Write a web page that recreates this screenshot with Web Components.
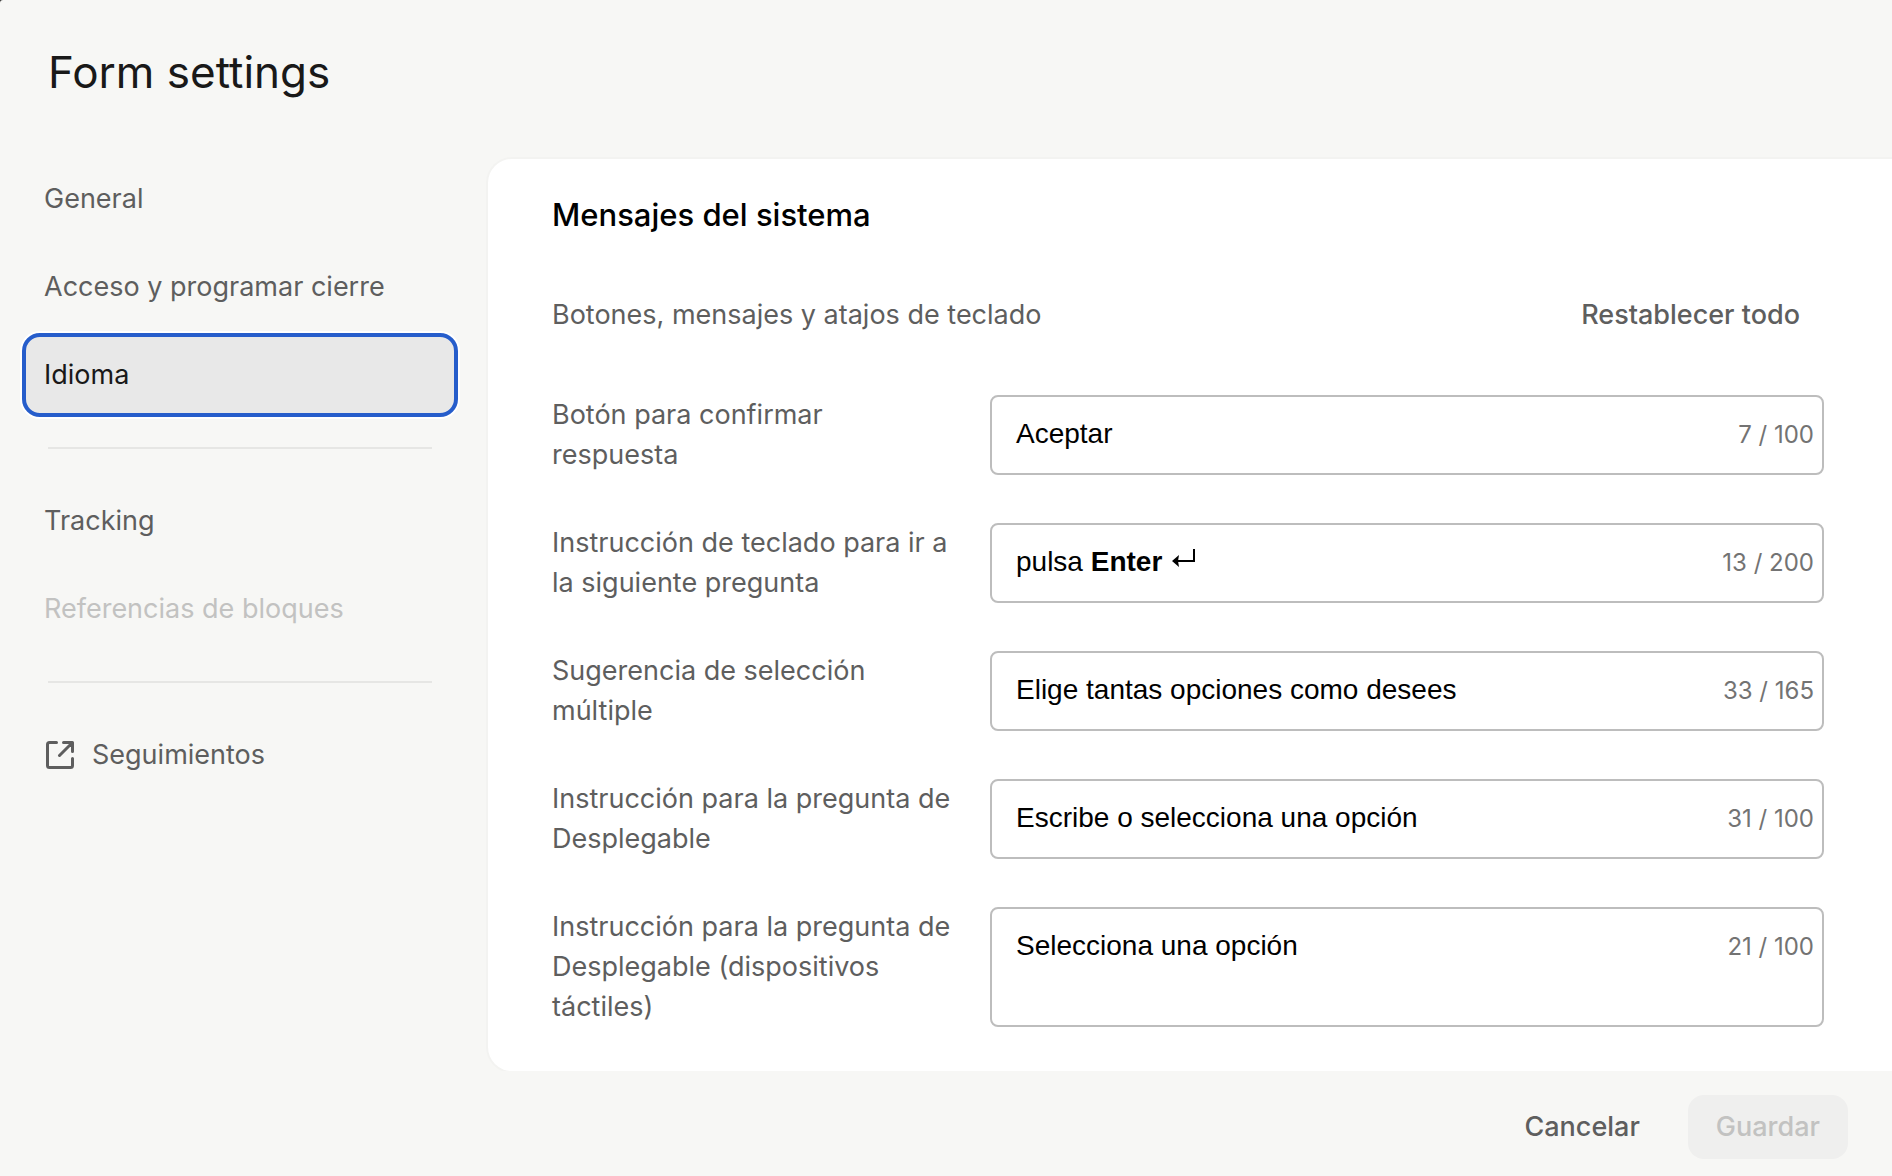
<!DOCTYPE html>
<html lang="es">
<head>
<meta charset="utf-8">
<title>Form settings</title>
<style>
  html, body { margin: 0; height: 100%; background: #333; }
  body { font-family: Inter, "Liberation Sans", sans-serif; font-size: 27px; line-height: 40px; color: #5e5e5e; }
</style>
</head>
<body>
<settings-dialog>
  <h1 slot="title">Form settings</h1>
  <settings-nav slot="nav">
    <nav-item>General</nav-item>
    <nav-item>Acceso y programar cierre</nav-item>
    <nav-item state="active">Idioma</nav-item>
    <nav-divider></nav-divider>
    <nav-item>Tracking</nav-item>
    <nav-item state="disabled">Referencias de bloques</nav-item>
    <nav-divider></nav-divider>
    <nav-item external>Seguimientos</nav-item>
  </settings-nav>
  <settings-panel>
    <span slot="heading">Mensajes del sistema</span>
    <span slot="intro">Botones, mensajes y atajos de teclado</span>
    <action-button slot="action" label="Restablecer todo"></action-button>
    <message-field label="Botón para confirmar respuesta" value="Aceptar" count="7 / 100"></message-field>
    <message-field label="Instrucción de teclado para ir a la siguiente pregunta" rich count="13 / 200">pulsa <b>Enter</b> <enter-icon></enter-icon></message-field>
    <message-field label="Sugerencia de selección múltiple" value="Elige tantas opciones como desees" count="33 / 165"></message-field>
    <message-field label="Instrucción para la pregunta de Desplegable" value="Escribe o selecciona una opción" count="31 / 100"></message-field>
    <message-field label="Instrucción para la pregunta de Desplegable (dispositivos táctiles)" value="Selecciona una opción" count="21 / 100"></message-field>
  </settings-panel>
  <action-button slot="footer" label="Cancelar"></action-button>
  <action-button slot="footer" label="Guardar" filled disabled></action-button>
</settings-dialog>

<script>
class Base extends HTMLElement {
  connectedCallback() {
    if (this.shadowRoot) return;
    this.attachShadow({ mode: 'open' }).innerHTML = this.render();
  }
}

customElements.define('settings-dialog', class extends Base {
  render() {
    return `<style>
      :host { display: flex; flex-direction: column; height: 100vh; background: #f7f7f5; border-top-left-radius: 3px; overflow: hidden; }
      header { box-sizing: border-box; height: 159px; flex: none; padding: 40px 48px; }
      ::slotted(h1) { margin: 0; font-size: 44px; line-height: 64px; font-weight: 400; color: #191919; }
      .body { display: flex; flex: 1; min-height: 0; }
      main { flex: 1; min-width: 0; overflow: hidden; background: #fff; border-radius: 24px 0 0 24px; box-shadow: 0 0 0 2px #f3f3f1; clip-path: inset(-2px 0 0 -2px); }
      footer { display: flex; justify-content: flex-end; gap: 24px; padding: 24px 44px 17px; }
    </style>
    <header><slot name="title"></slot></header>
    <div class="body"><slot name="nav"></slot><main><slot></slot></main></div>
    <footer><slot name="footer"></slot></footer>`;
  }
});

customElements.define('settings-nav', class extends Base {
  render() {
    return `<style>
      :host { display: block; flex: 0 0 488px; box-sizing: border-box; padding: 0 32px 0 24px; }
      nav { display: flex; flex-direction: column; gap: 8px; }
    </style><nav><slot></slot></nav>`;
  }
});

customElements.define('nav-item', class extends Base {
  render() {
    const icon = this.hasAttribute('external') ? `<svg width="32" height="32" viewBox="0 0 32 32" fill="none" stroke="currentColor" stroke-width="3" stroke-linecap="round" stroke-linejoin="round" aria-hidden="true"><path d="M12.500 3.500H5.500Q3.500 3.500 3.500 5.500V26.500Q3.500 28.500 5.500 28.500H26.500Q28.500 28.500 28.500 26.500V19.500M19.500 3.500H28.500V12.500M28 4L15.500 16.500"/></svg>` : '';
    return `<style>
      :host { display: block; }
      button { box-sizing: border-box; display: flex; align-items: center; gap: 16px; width: 100%; height: 80px; padding: 0 20px; border: 0; border-radius: 16px; background: none; font: inherit; color: inherit; text-align: left; }
      :host([state=active]) button { background: #e8e8e8; color: #191919; outline: 4px solid #265dcb; outline-offset: -2px; box-shadow: 0 0 0 4px #fff; }
      :host([state=disabled]) button { color: #c2c2c1; }
    </style><button${this.getAttribute('state') === 'disabled' ? ' disabled' : ''}>${icon}<span><slot></slot></span></button>`;
  }
});

customElements.define('nav-divider', class extends Base {
  render() {
    return `<style>
      :host { display: block; padding: 24px; }
      hr { margin: 0; border: 0; height: 2px; background: #e6e6e4; }
    </style><hr>`;
  }
});

customElements.define('action-button', class extends Base {
  render() {
    return `<style>
      :host { display: block; }
      button { box-sizing: border-box; height: 64px; padding: 0 24px; border: 0; border-radius: 16px; background: none; font: inherit; font-weight: 500; color: inherit; white-space: nowrap; }
      :host([filled]) button { padding: 0 28px; background: #efefee; color: #c2c2c1; }
    </style><button${this.hasAttribute('disabled') ? ' disabled' : ''}>${this.getAttribute('label')}</button>`;
  }
});

customElements.define('settings-panel', class extends Base {
  render() {
    return `<style>
      :host { display: block; padding: 36px 68px 44px 64px; }
      h2 { margin: 0; font-size: 31px; line-height: 40px; font-weight: 500; color: #000; }
      .intro { display: flex; justify-content: space-between; align-items: center; margin: 48px 0; }
      p { margin: 0; }
      .fields { display: flex; flex-direction: column; gap: 48px; }
    </style>
    <h2><slot name="heading"></slot></h2>
    <div class="intro"><p><slot name="intro"></slot></p><slot name="action"></slot></div>
    <div class="fields"><slot></slot></div>`;
  }
});

customElements.define('message-field', class extends Base {
  render() {
    const rich = this.hasAttribute('rich');
    const label = this.getAttribute('label');
    const control = rich
      ? `<div class="control" role="textbox" contenteditable="true" spellcheck="false" aria-labelledby="label"><slot></slot></div>`
      : `<textarea class="control" id="control" rows="1" spellcheck="false">${this.getAttribute('value')}</textarea>`;
    return `<style>
      :host { display: flex; gap: 38px; }
      label { flex: 0 0 400px; }
      .box { box-sizing: border-box; flex: 1; min-width: 0; display: flex; align-items: stretch; border: 2px solid #bdbdbd; border-radius: 8px; background: #fff; }
      .control { box-sizing: border-box; flex: 1; min-width: 0; height: auto; margin: 0; padding: 17px 24px 16px; border: 0; outline: 0; resize: none; overflow: hidden; background: none; font: 28px/40px "Liberation Sans", Arial, sans-serif; color: #000; }
      output { padding: 18px 8px; font-size: 24px; line-height: 40px; color: #737373; white-space: nowrap; }
    </style>
    <label id="label"${rich ? '' : ' for="control"'}>${label}</label>
    <div class="box">${control}<output>${this.getAttribute('count')}</output></div>`;
  }
});

customElements.define('enter-icon', class extends Base {
  render() {
    return `<style>:host { display: inline-block; } svg { display: block; }</style>
    <svg width="28" height="24" viewBox="0 0 28 24" fill="none" aria-hidden="true"><path d="M24 2V14H8" stroke="#000" stroke-width="2"/><path d="M2 14L9 8L8 14L9 20Z" fill="#000"/></svg>`;
  }
});
</script>
</body>
</html>
